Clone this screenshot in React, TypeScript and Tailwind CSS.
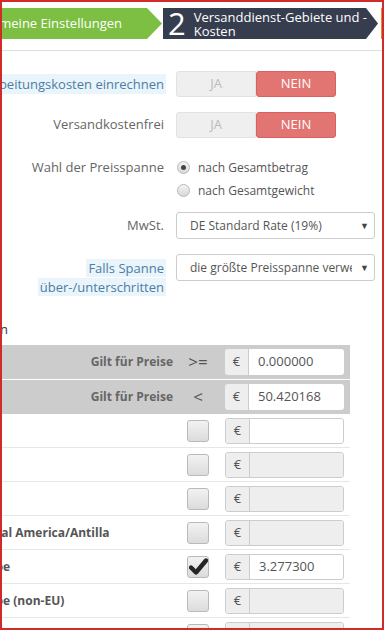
import React from 'react';

const rows = [
  { name: 'Asia', checked: false, value: '', enabled: true },
  { name: 'Japan', checked: false, value: '', enabled: false },
  { name: 'Asia', checked: false, value: '', enabled: false },
  { name: 'Central America/Antilla', checked: false, value: '', enabled: false },
  { name: 'Europe', checked: true, value: '3.277300', enabled: true },
  { name: 'Europe (non-EU)', checked: false, value: '', enabled: false },
  { name: 'North America', checked: false, value: '', enabled: false },
];

function Toggle() {
  return (
    <div className="flex h-[26px] w-[160px]">
      <div className="flex-1 flex items-center justify-center bg-[#efefef] border border-[#e2e2e2] rounded-l-[3px] text-[13px] text-[#bbbbbb]">JA</div>
      <div className="flex-1 flex items-center justify-center bg-[#e27472] border border-[#d8605e] rounded-[3px] text-[13px] text-white">NEIN</div>
    </div>
  );
}

function Select({ text }: { text: string }) {
  return (
    <div className="flex items-center h-[27px] w-[199px] border border-[#cccccc] rounded-[3px] pl-[13px] pr-[5px] text-[12px] text-[#555555]">
      <span className="flex-1 whitespace-nowrap overflow-hidden">{text}</span>
      <span className="text-[9px] text-[#444444] ml-[8px]">▼</span>
    </div>
  );
}

function Radio({ checked, label }: { checked: boolean; label: string }) {
  return (
    <div className="flex items-center h-[23px] text-[12px] text-[#555555]">
      <span className="w-[13px] h-[13px] rounded-full border border-[#b8b8b8] bg-linear-to-b from-[#f4f4f4] to-[#d8d8d8] flex items-center justify-center">
        {checked && <span className="w-[5px] h-[5px] rounded-full bg-[#444444]" />}
      </span>
      <span className="ml-[8px]">{label}</span>
    </div>
  );
}

function EuroInput({ value, enabled, white }: { value: string; enabled: boolean; white?: boolean }) {
  return (
    <div className={`flex h-[26px] w-[119px] rounded-[3px] text-[13px] text-[#555555] ${white ? '' : 'border border-[#cccccc]'}`}>
      <div className="w-[24px] flex items-center justify-center bg-[#eeeeee] border-r border-[#cccccc] rounded-l-[3px]">€</div>
      <div className={`flex-1 flex items-center pl-[9px] rounded-r-[3px] ${enabled ? 'bg-white' : 'bg-[#eeeeee]'}`}>{value}</div>
    </div>
  );
}

function Checkbox({ checked }: { checked: boolean }) {
  return (
    <div className="w-[22px] h-[22px] rounded-[3px] border border-[#b9b9b9] bg-linear-to-b from-[#f2f2f2] to-[#dcdcdc] flex items-center justify-center">
      {checked && (
        <svg width="19" height="17" viewBox="0 0 19 17">
          <path d="M2 9.5 L7 14.5 L17 2.5" stroke="#262626" strokeWidth="4.4" fill="none" strokeLinecap="round" strokeLinejoin="round" />
        </svg>
      )}
    </div>
  );
}

export default function App() {
  return (
    <div className="w-[384px] h-[630px] border-2 border-[#d02a2a] overflow-hidden bg-white font-['Open_Sans',sans-serif]">
      {/* step header */}
      <div className="flex pt-[6px] h-[37px]">
        <div className="w-[160px] shrink-0 bg-[#7cbf42] flex items-center justify-end pr-[40px] overflow-hidden whitespace-nowrap text-white [clip-path:polygon(0_0,calc(100%_-_15px)_0,100%_50%,calc(100%_-_15px)_100%,0_100%)]">
          <span className="text-[30px] leading-none mr-[8px]">1</span>
          <span className="text-[13px]">Allgemeine Einstellungen</span>
        </div>
        <div className="w-[215px] shrink-0 ml-[1px] bg-[#363d4e] flex items-center pl-[5px] text-white [clip-path:polygon(0_0,calc(100%_-_12px)_0,100%_50%,calc(100%_-_12px)_100%,0_100%)]">
          <span className="text-[31px] leading-none">2</span>
          <span className="ml-[8px] text-[13px] leading-[14px]">Versanddienst-Gebiete und -<br />Kosten</span>
        </div>
        <div className="w-[20px] shrink-0 ml-[3px] bg-[#e8892e]" />
      </div>
      <div className="mt-[11px] border-t border-[#dddddd]" />

      {/* form */}
      <div className="flex flex-col text-[13px]">
        <div className="flex items-center mt-[20px]">
          <div className="w-[164px] flex justify-end overflow-hidden whitespace-nowrap">
            <span className="bg-[#eaf4fb] text-[#4a7ea5] px-[2px] leading-[20px]">Bearbeitungskosten einrechnen</span>
          </div>
          <div className="ml-[10px]"><Toggle /></div>
        </div>
        <div className="flex items-center mt-[15px]">
          <div className="w-[164px] flex justify-end whitespace-nowrap text-[#666666] pr-[2px]">Versandkostenfrei</div>
          <div className="ml-[10px]"><Toggle /></div>
        </div>
        <div className="flex mt-[18px]">
          <div className="w-[164px] flex justify-end items-center h-[23px] whitespace-nowrap text-[#666666] pr-[2px]">Wahl der Preisspanne</div>
          <div className="ml-[10px] pl-[1px] flex flex-col">
            <Radio checked label="nach Gesamtbetrag" />
            <Radio checked={false} label="nach Gesamtgewicht" />
          </div>
        </div>
        <div className="flex items-center mt-[10px]">
          <div className="w-[164px] flex justify-end whitespace-nowrap text-[#666666] pr-[2px]">MwSt.</div>
          <div className="ml-[10px]"><Select text="DE Standard Rate (19%)" /></div>
        </div>
        <div className="flex mt-[15px]">
          <div className="w-[164px] text-right pt-[5px] leading-[19px]">
            <span className="bg-[#eaf4fb] text-[#4a7ea5] px-[2px] [box-decoration-break:clone]">Falls Spanne<br />über-/unterschritten</span>
          </div>
          <div className="ml-[10px]"><Select text="die größte Preisspanne verwenden" /></div>
        </div>

        <div className="mt-[23px] flex leading-[18px] text-[#333333]">
          <div className="w-[6px] flex justify-end overflow-hidden whitespace-nowrap">Versandkosten nach Regionen</div>
        </div>

        {/* table */}
        <div className="mt-[7px] w-[348px]">
          <div className="flex items-center h-[34px] bg-[#cccccc]">
            <div className="flex-1 text-right pr-[14px] font-bold text-[12px] text-[#666666]">Gilt für Preise</div>
            <div className="w-[22px] text-center text-[17px] text-[#555555] whitespace-nowrap">&gt;=</div>
            <div className="ml-[16px] mr-[6px]"><EuroInput value="0.000000" enabled white /></div>
          </div>
          <div className="flex items-center h-[34px] bg-[#cccccc] mt-[1px]">
            <div className="flex-1 text-right pr-[14px] font-bold text-[12px] text-[#666666]">Gilt für Preise</div>
            <div className="w-[22px] text-center text-[17px] text-[#555555]">&lt;</div>
            <div className="ml-[16px] mr-[6px]"><EuroInput value="50.420168" enabled white /></div>
          </div>
          {rows.map((r, i) => (
            <div key={i} className="flex items-center h-[34px] border-b border-[#e6e6e6]">
              <div className="flex-1 overflow-hidden whitespace-nowrap pr-[14px]">
                <span className="block -ml-[34px] font-bold text-[12px] text-[#555555]">{r.name}</span>
              </div>
              <Checkbox checked={r.checked} />
              <div className="ml-[16px] mr-[6px]"><EuroInput value={r.value} enabled={r.enabled} /></div>
            </div>
          ))}
        </div>
      </div>
    </div>
  );
}
